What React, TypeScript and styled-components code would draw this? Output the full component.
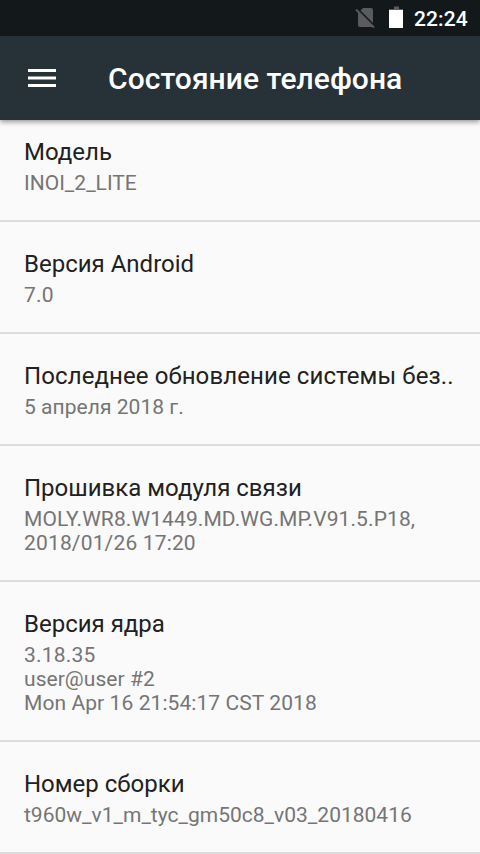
import React from "react";
import styled, { createGlobalStyle } from "styled-components";

const Global = createGlobalStyle`
  * { box-sizing: border-box; }
  body { margin: 0; background: #fafafa; font-family: Roboto, "Noto Sans", sans-serif; overflow: hidden; }
`;
const Screen = styled.main`
  width: 480px; height: 854px; overflow: hidden;
  display: flex; flex-direction: column; background: #fafafa;
`;
const StatusBar = styled.div`
  height: 36px; flex: none; display: flex; align-items: center; justify-content: flex-end;
  padding-right: 12px; gap: 10px; background: #13181b; color: #fff;
`;
const Clock = styled.span`
  width: 54px; padding-top: 2px; font-size: 21px; font-weight: 500; line-height: 36px; letter-spacing: 0.1px;
  white-space: nowrap;
`;
const AppBar = styled.header`
  height: 84px; flex: none; display: flex; align-items: center; padding-left: 28px; gap: 52px;
  background: #263238; color: #fff; box-shadow: 0 2px 5px rgba(0,0,0,.4); z-index: 1;
`;
const Title = styled.h1`
  margin: 0; padding-top: 2px; font-size: 30px; font-weight: 500; line-height: 36px;
  letter-spacing: 0.05px; white-space: nowrap;
`;
const List = styled.div`
  display: flex; flex-direction: column; margin-top: -10px;
`;
const Row = styled.section`
  flex: none; padding: 28px 24px 25px; border-bottom: 2px solid #dcdcdc;
`;
const Label = styled.div<{ $spacing?: number }>`
  font-size: 24px; line-height: 28px; color: #212121; white-space: nowrap;
  letter-spacing: ${(p) => p.$spacing ?? 0}px;
`;
const Value = styled.div`
  margin-top: 5px;
`;
const Line = styled.div<{ $spacing?: number }>`
  font-size: 21px; line-height: 24px; color: #757575; white-space: nowrap;
  letter-spacing: ${(p) => p.$spacing ?? 0}px;
`;

type Text = { text: string; spacing?: number };
const items: { label: Text; lines: Text[] }[] = [
  { label: { text: "Модель" }, lines: [{ text: "INOI_2_LITE" }] },
  { label: { text: "Версия Android" }, lines: [{ text: "7.0", spacing: 0.2 }] },
  {
    label: { text: "Последнее обновление системы без..", spacing: 0.1 },
    lines: [{ text: "5 апреля 2018 г.", spacing: 0.04 }],
  },
  {
    label: { text: "Прошивка модуля связи" },
    lines: [
      { text: "MOLY.WR8.W1449.MD.WG.MP.V91.5.P18,", spacing: 0.1 },
      { text: "2018/01/26 17:20", spacing: 0.16 },
    ],
  },
  {
    label: { text: "Версия ядра" },
    lines: [
      { text: "3.18.35", spacing: 0.2 },
      { text: "user@user #2", spacing: 0.05 },
      { text: "Mon Apr 16 21:54:17 CST 2018", spacing: 0.08 },
    ],
  },
  { label: { text: "Номер сборки" }, lines: [{ text: "t960w_v1_m_tyc_gm50c8_v03_20180416" }] },
];

export default function App() {
  return (
    <Screen>
      <Global />
      <StatusBar>
        <svg width="50" height="36" viewBox="0 0 50 36">
          <path d="M9 8H17Q19 8 19 10V23L6.500 10.500ZM4 11.500L18.500 25.500V27H6Q4 27 4 25Z" fill="#595b5c" />
          <path d="M2 9.500L20 27.500" stroke="#595b5c" strokeWidth="1.800" />
          <path d="M40 6.500H45V9H49V11H35V9H40Z" fill="#595b5c" />
          <path d="M35 10H49V28H35Z" fill="#fff" />
        </svg>
        <Clock>22:24</Clock>
      </StatusBar>
      <AppBar>
        <svg width="28" height="20" viewBox="0 0 28 20">
          <path d="M0 2.500H28M0 10H28M0 17.500H28" stroke="#fff" strokeWidth="3" />
        </svg>
        <Title>Состояние телефона</Title>
      </AppBar>
      <List>
        {items.map((it) => (
          <Row key={it.label.text}>
            <Label $spacing={it.label.spacing}>{it.label.text}</Label>
            <Value>
              {it.lines.map((line) => (
                <Line key={line.text} $spacing={line.spacing}>{line.text}</Line>
              ))}
            </Value>
          </Row>
        ))}
      </List>
    </Screen>
  );
}
